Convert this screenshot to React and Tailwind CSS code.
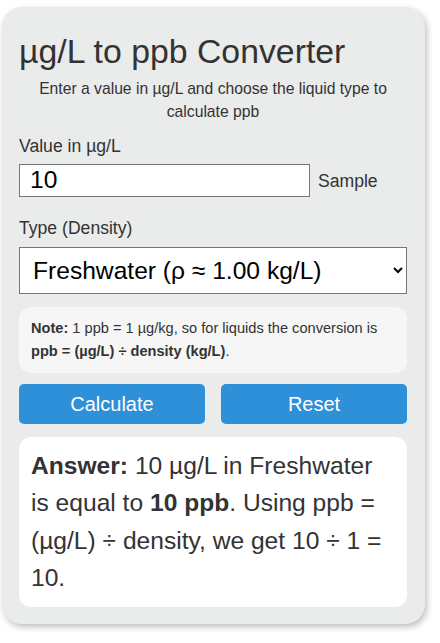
import { useState } from 'react';

const liquids = [
  { name: 'Freshwater', density: 1.0, label: 'Freshwater (ρ ≈ 1.00 kg/L)' },
  { name: 'Seawater', density: 1.025, label: 'Seawater (ρ ≈ 1.025 kg/L)' },
  { name: 'Ethanol', density: 0.789, label: 'Ethanol (ρ ≈ 0.789 kg/L)' },
];

function App() {
  const [value, setValue] = useState('10');
  const [type, setType] = useState('Freshwater');
  const [result, setResult] = useState({ value: 10, type: 'Freshwater', density: 1, ppb: 10 });

  const handleCalculate = () => {
    const liquid = liquids.find(l => l.name === type);
    const v = parseFloat(value) || 0;
    setResult({ value: v, type, density: liquid.density, ppb: +(v / liquid.density).toFixed(4) });
  };

  const handleReset = () => {
    setValue('10');
    setType('Freshwater');
    setResult({ value: 10, type: 'Freshwater', density: 1, ppb: 10 });
  };

  return (
    <div className="min-h-screen bg-white pt-[7px] pl-[2px] font-[Liberation_Sans,Arial,sans-serif]">
      <div className="w-[423px] rounded-[20px] bg-[#eaebeb] pt-[25px] pb-[17px] pl-[17px] pr-[18px] shadow-[2px_3px_6px_rgba(0,0,0,0.25)]">
        <h1 className="text-[33.8px] leading-[1.15] text-[#333]">µg/L to ppb Converter</h1>
        <p className="mt-[6px] text-center text-[15.7px] leading-[23.5px] text-[#333]">
          Enter a value in µg/L and choose the liquid type to calculate ppb
        </p>

        <label className="mt-[9px] block text-[17.6px] leading-[26.4px] text-[#333]">Value in µg/L</label>
        <div className="mt-[5px] flex items-center gap-[8px]">
          <input
            type="text"
            value={value}
            onChange={e => setValue(e.target.value)}
            className="h-[33px] w-[291px] border border-[#767676] bg-white px-[10px] text-[24.6px] text-black outline-none"
          />
          <span className="text-[17.6px] text-[#333]">Sample</span>
        </div>

        <label className="mt-[18px] block text-[17.6px] leading-[26.4px] text-[#333]">Type (Density)</label>
        <select
          value={type}
          onChange={e => setType(e.target.value)}
          className="mt-[5px] block h-[47px] w-full border border-[#767676] bg-white pl-[9px] pr-[7px] text-[24.6px] text-black"
        >
          {liquids.map(l => (
            <option key={l.name} value={l.name}>{l.label}</option>
          ))}
        </select>

        <div className="mt-[13px] rounded-[12px] bg-[#f6f6f6] px-[12px] py-[10px] text-[14.6px] leading-[23px] text-[#333]">
          <b>Note:</b> 1 ppb = 1 µg/kg, so for liquids the conversion is{' '}
          <b>ppb = (µg/L) ÷ density (kg/L)</b>.
        </div>

        <div className="mt-[11px] grid grid-cols-2 gap-[16px]">
          <button
            onClick={handleCalculate}
            className="h-[40px] rounded-[5px] bg-[#2e90d8] text-[20px] text-white"
          >
            Calculate
          </button>
          <button
            onClick={handleReset}
            className="h-[40px] rounded-[5px] bg-[#2e90d8] text-[20px] text-white"
          >
            Reset
          </button>
        </div>

        <div className="mt-[13px] rounded-[12px] bg-white px-[12px] py-[10px] text-[24.6px] leading-[37.6px] text-[#333]">
          <b>Answer:</b> {result.value} µg/L in {result.type} is equal to <b>{result.ppb} ppb</b>. Using ppb =
          (µg/L) ÷ density, we get {result.value} ÷ {result.density} = {result.ppb}.
        </div>
      </div>
    </div>
  );
}

export default App;
